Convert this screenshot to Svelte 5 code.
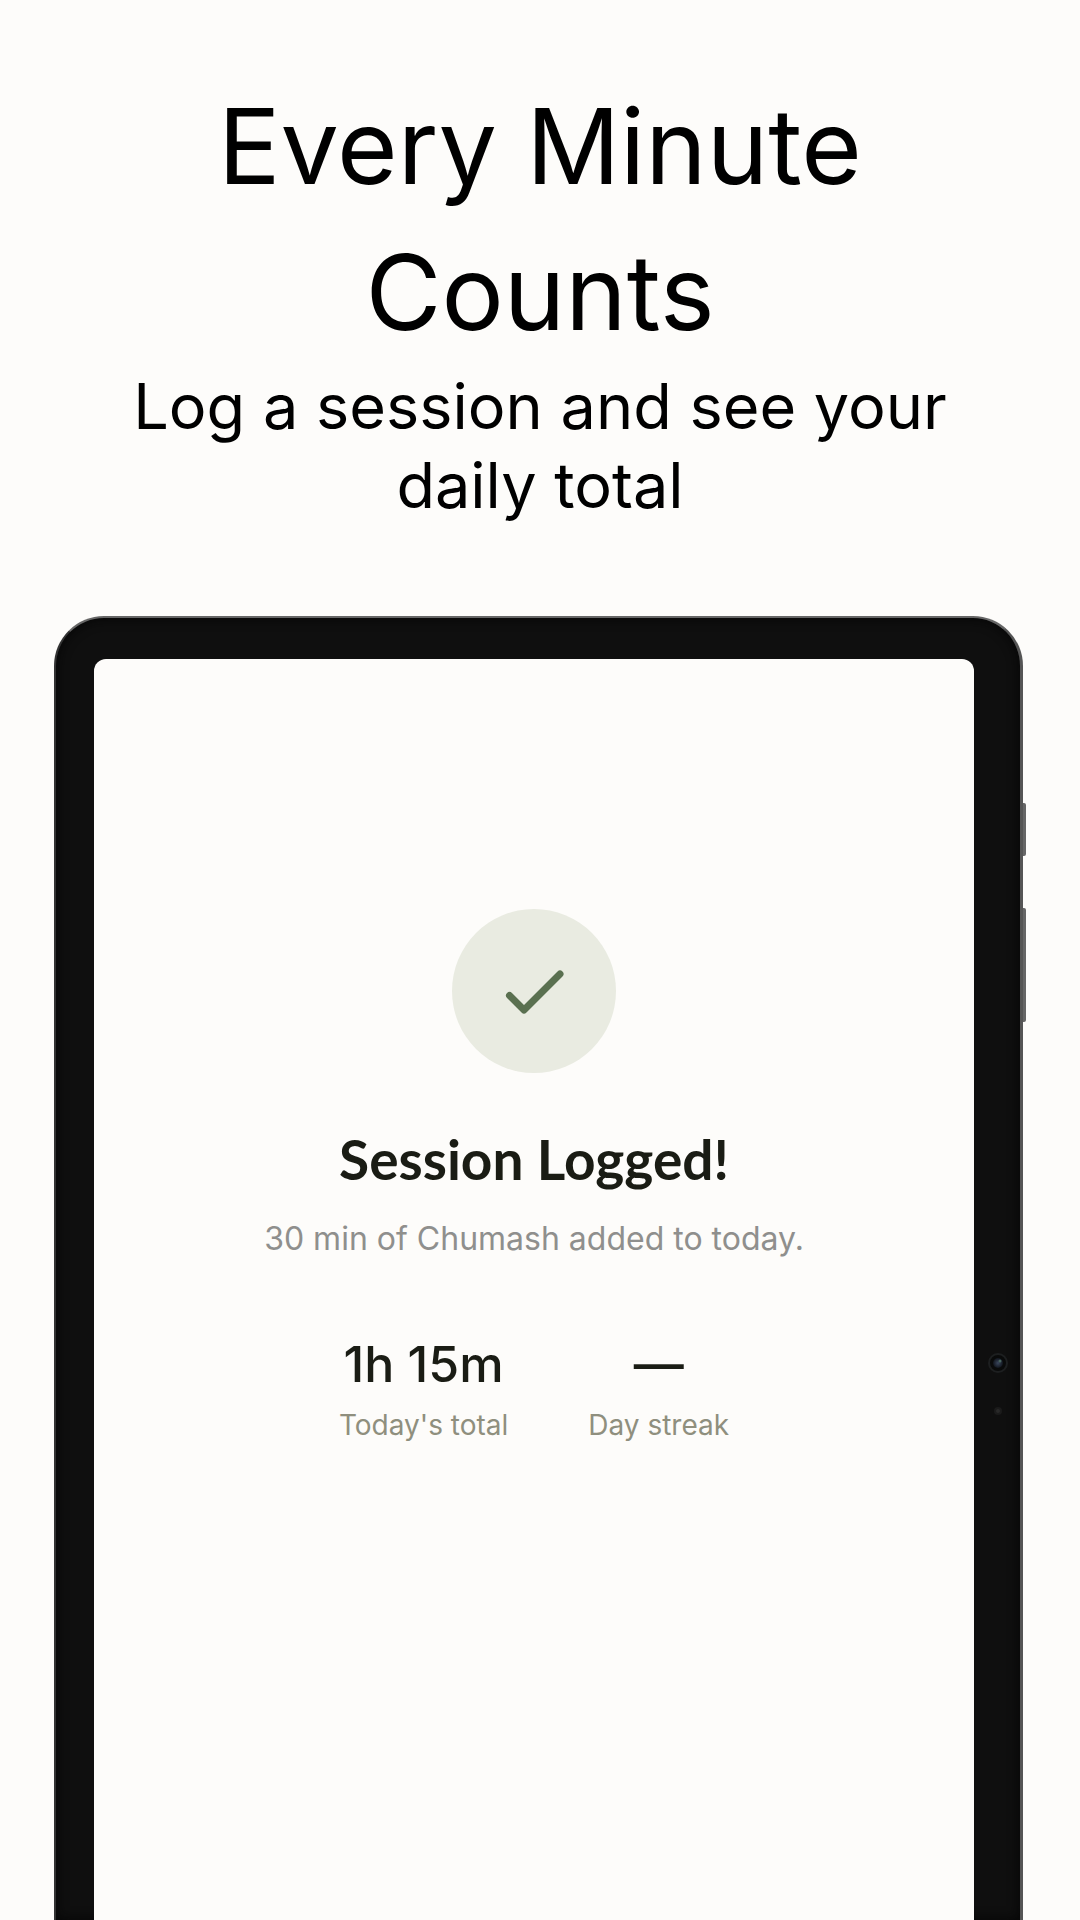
<!--
	Store listing slide: a headline and tagline above a tablet that runs off the bottom
	edge. The tablet shows the "session logged" confirmation.
-->
<script lang="ts">
	type Stat = { label: string; value: string };

	const stats: Stat[] = [
		{ label: "Today's total", value: '1h 15m' },
		{ label: 'Day streak', value: '—' }
	];
</script>

<main class="slide">
	<header class="intro">
		<h1>Every Minute Counts</h1>
		<p>Log a session and see your daily total</p>
	</header>

	<div class="tablet">
		<span class="key power"></span>
		<span class="key volume"></span>
		<svg class="camera" viewBox="0 0 20 64" aria-hidden="true">
			<defs>
				<radialGradient id="lens">
					<stop offset="0" stop-color="#39465c" />
					<stop offset="1" stop-color="#11151d" />
				</radialGradient>
			</defs>
			<circle cx="10" cy="10" r="9" fill="#090a0a" stroke="#1d1f20" stroke-width="2" />
			<circle cx="10" cy="10" r="5" fill="url(#lens)" />
			<circle cx="12" cy="8" r="1.5" fill="#48645f" />
			<circle cx="10" cy="58" r="4" fill="#1b1b1b" />
			<circle cx="10" cy="58" r="2" fill="#292929" />
		</svg>

		<section class="screen">
			<div class="badge">
				<svg viewBox="0 0 164 164" aria-hidden="true">
					<path d="M57.5 86.5 72 101 108 65" />
				</svg>
			</div>
			<h2>Session Logged!</h2>
			<p class="summary">30 min of Chumash added to today.</p>
			<dl class="stats">
				{#each stats as stat (stat.label)}
					<div class="stat">
						<dt>{stat.label}</dt>
						<dd>{stat.value}</dd>
					</div>
				{/each}
			</dl>
		</section>
	</div>
</main>

<style>
	:global(body) {
		margin: 0;
		background: #fdfcfa;
	}
	.slide {
		box-sizing: border-box;
		display: flex;
		flex-direction: column;
		min-height: 100vh;
		padding-top: 73px;
		overflow: hidden;
		font-family: Inter, sans-serif;
		color: #000;
	}
	.intro {
		padding: 0 120px;
		margin-bottom: 91px;
		text-align: center;
	}
	h1,
	h2,
	p,
	dl,
	dd {
		margin: 0;
	}
	h1 {
		margin-bottom: 2px;
		font-size: 104px;
		font-weight: 400;
		line-height: 146px;
	}
	.intro p {
		font-size: 63px;
		line-height: 79px;
	}
	.tablet {
		position: relative;
		display: flex;
		flex: 1;
		box-sizing: border-box;
		margin: 0 57px 0 54px;
		padding: 41px 46px 0 38px;
		border: solid;
		border-width: 2px 3px 0 2px;
		border-color: #666 #555 #444 #333;
		border-radius: 50px 50px 0 0;
		background: #0f0f0f;
		box-shadow: inset 0 0 12px #050505;
	}
	.key {
		position: absolute;
		left: calc(100% + 3px);
		width: 3px;
		border-radius: 0 2px 2px 0;
		background: #666;
	}
	.power {
		top: 185px;
		height: 53px;
	}
	.volume {
		top: 290px;
		height: 114px;
	}
	.camera {
		position: absolute;
		top: 735px;
		right: 12px;
		width: 20px;
		height: 64px;
	}
	.screen {
		display: flex;
		flex: 1;
		flex-direction: column;
		align-items: center;
		padding: 250px 24px 0;
		border-radius: 12px 12px 0 0;
		background: #fdfcfa;
		text-align: center;
	}
	.badge {
		width: 164px;
		height: 164px;
		margin-bottom: 54px;
		border-radius: 50%;
		background: #e9ebe1;
	}
	.badge path {
		fill: none;
		stroke: #5a7050;
		stroke-width: 7;
		stroke-linecap: round;
		stroke-linejoin: round;
	}
	h2 {
		font-family: Lato, sans-serif;
		font-size: 55px;
		font-weight: 700;
		line-height: 64px;
		color: #1a1c14;
	}
	.summary {
		margin-top: 28px;
		font-size: 32px;
		line-height: 40px;
		color: #8f8f8d;
	}
	.stats {
		display: flex;
		gap: 80px;
		margin-top: 73px;
	}
	.stat {
		display: flex;
		flex-direction: column-reverse;
	}
	dt {
		margin-top: 9px;
		font-size: 28px;
		line-height: 40px;
		color: #8f8f7e;
	}
	dd {
		font-size: 50px;
		font-weight: 500;
		line-height: 64px;
		color: #1a1c14;
	}
</style>
